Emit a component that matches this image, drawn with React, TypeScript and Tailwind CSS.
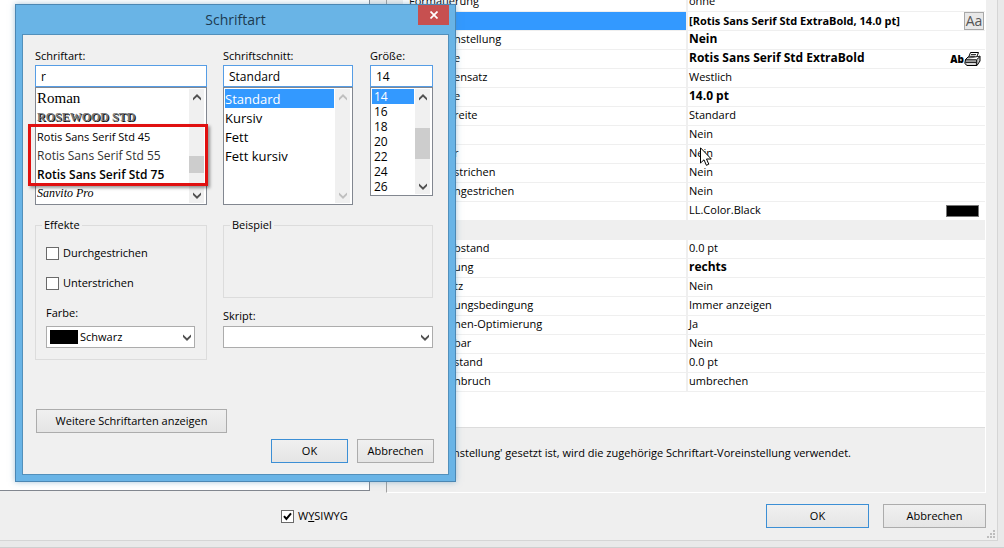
import React from 'react';
import { clsx } from 'clsx';

interface Property {
  label: string;
  value?: string;
  bold?: boolean;
  selected?: boolean;
  section?: boolean;
  extra?: 'font' | 'printer' | 'color';
}

const properties: Property[] = [
  { label: 'Formatierung', value: 'ohne' },
  { label: '', value: '[Rotis Sans Serif Std ExtraBold, 14.0 pt]', selected: true, extra: 'font' },
  { label: 'nstellung', value: 'Nein', bold: true },
  { label: 'e', value: 'Rotis Sans Serif Std ExtraBold', bold: true, extra: 'printer' },
  { label: 'ensatz', value: 'Westlich' },
  { label: 'e', value: '14.0 pt', bold: true },
  { label: 'reite', value: 'Standard' },
  { label: '', value: 'Nein' },
  { label: 'r', value: 'Nein' },
  { label: 'strichen', value: 'Nein' },
  { label: 'ngestrichen', value: 'Nein' },
  { label: '', value: 'LL.Color.Black', extra: 'color' },
  { label: '', section: true },
  { label: 'bstand', value: '0.0 pt' },
  { label: 'ung', value: 'rechts', bold: true },
  { label: 'tz', value: 'Nein' },
  { label: 'ungsbedingung', value: 'Immer anzeigen' },
  { label: 'nen-Optimierung', value: 'Ja' },
  { label: 'bar', value: 'Nein' },
  { label: 'stand', value: '0.0 pt' },
  { label: 'nbruch', value: 'umbrechen' },
];

const fonts = [
  { name: 'Roman', className: 'font-["Liberation_Serif",serif] text-[15px]' },
  {
    name: 'ROSEWOOD STD',
    className:
      'font-["Liberation_Serif",serif] text-xs font-bold text-[#777] [text-shadow:1px_1px_0_#111]',
  },
  { name: 'Rotis Sans Serif Std 45', className: 'text-[11px]' },
  { name: 'Rotis Sans Serif Std 55', className: 'text-xs text-[#333]' },
  { name: 'Rotis Sans Serif Std 75', className: 'text-xs font-semibold' },
  { name: 'Sanvito Pro', className: 'font-["Liberation_Serif",serif] text-xs italic' },
];

const styles = ['Standard', 'Kursiv', 'Fett', 'Fett kursiv'];
const sizes = ['14', '16', '18', '20', '22', '24', '26'];

const Chevron: React.FC<{ up?: boolean; className?: string }> = ({ up, className }) => (
  <svg viewBox="0 0 8 7" className={clsx('w-2 h-[7px]', className)} fill="currentColor" aria-hidden="true">
    <path d={up ? 'M0 4 4 0 8 4V6.6L4 2.8 0 6.6Z' : 'M0 3 4 7 8 3V.4L4 4.2 0 .4Z'} />
  </svg>
);

const ScrollBar: React.FC<{ disabled?: boolean; thumb?: string }> = ({ disabled, thumb }) => (
  <div
    className={clsx(
      'relative flex w-[15px] shrink-0 flex-col justify-between bg-[#f0f0f0]',
      disabled ? 'text-[#bfbfbf]' : 'text-[#505050]'
    )}
  >
    <button disabled={disabled} aria-label="Nach oben" className="flex h-4 items-center justify-center">
      <Chevron up />
    </button>
    {thumb && <div className={clsx('absolute inset-x-0 bg-[#cdcdcd]', thumb)} />}
    <button disabled={disabled} aria-label="Nach unten" className="flex h-4 items-center justify-center">
      <Chevron />
    </button>
  </div>
);

const DialogButton: React.FC<{ primary?: boolean; className?: string; children: React.ReactNode }> = ({
  primary,
  className,
  children,
}) => (
  <button
    className={clsx(
      'h-6 border bg-linear-to-b from-[#f0f0f0] to-[#e5e5e5] text-center',
      primary ? 'border-[#3c8fd5]' : 'border-[#acacac]',
      className
    )}
  >
    {children}
  </button>
);

const CheckBox: React.FC<{ id: string; checked?: boolean; children: React.ReactNode }> = ({
  id,
  checked,
  children,
}) => (
  <div className="flex items-center gap-1">
    <span className="relative flex">
      <input
        id={id}
        type="checkbox"
        defaultChecked={checked}
        className="peer h-[13px] w-[13px] appearance-none border border-[#6a6a6a] bg-white"
      />
      <svg
        viewBox="0 0 13 13"
        className="pointer-events-none absolute inset-0 hidden h-[13px] w-[13px] peer-checked:block"
        fill="none"
        stroke="#000"
        strokeWidth="2"
      >
        <path d="M3 6.2 5.4 9 10 3.4" />
      </svg>
    </span>
    <label htmlFor={id}>{children}</label>
  </div>
);

const PrinterIcon: React.FC = () => (
  <svg viewBox="0 0 17 16" className="h-4 w-[17px]" stroke="#000" fill="#fff" aria-hidden="true">
    <path d="M4.5 6.5 6.5 1.5H14.5L12.5 6.5Z" />
    <path d="M7 3.5H12M6.3 5.2H11.5" strokeWidth=".8" />
    <path d="M1.5 8.5 4 6H13L16 5V10L13 14.5H3L.8 12.5Z" fill="#c4c4c4" />
    <path d="M1 8.8H12.5L16 5.5M12.7 9V14M1.5 11.3H12" />
    <path d="M3 13H11" stroke="#fff" strokeWidth=".8" />
  </svg>
);

const PropertyGrid: React.FC = () => (
  <table className="-mt-[7px] w-full table-fixed border-separate border-spacing-0 leading-4">
    <colgroup>
      <col className="w-[285px]" />
      <col />
    </colgroup>
    <tbody>
      {properties.map((p, i) =>
        p.section ? (
          <tr key={i}>
            <td colSpan={2} className="h-[19px] bg-[#efefef] p-0" />
          </tr>
        ) : (
          <tr key={i}>
            <td
              className={clsx(
                'h-[19px] border-r-2 border-b border-[#efefef] pt-0 pb-0.5 whitespace-nowrap',
                i === 0 ? 'pl-1.5' : 'pl-[51px]',
                p.selected && 'bg-[#3399ff]'
              )}
            >
              {p.label}
            </td>
            <td className="h-[19px] border-b border-[#efefef] p-0 pl-px">
              <div className="flex h-[18px] items-center justify-between">
                <span
                  className={clsx(
                    'whitespace-nowrap',
                    p.bold && 'text-xs font-bold',
                    p.selected && 'font-bold',
                    !p.selected && 'pb-0.5'
                  )}
                >
                  {p.value}
                </span>
                {p.extra === 'font' && (
                  <button className="mr-px h-[18px] w-5 border border-[#a8a8a8] bg-[#e8e8e8] text-sm leading-4 text-[#555]">
                    Aa
                  </button>
                )}
                {p.extra === 'printer' && (
                  <span className="mr-1 flex items-center text-[10px] font-extrabold">
                    Ab
                    <PrinterIcon />
                  </span>
                )}
                {p.extra === 'color' && <span className="mr-1.5 h-3 w-[33px] border border-[#777] bg-black" />}
              </div>
            </td>
          </tr>
        )
      )}
    </tbody>
  </table>
);

const inputClass = 'h-[22px] w-full border border-[#569de5] bg-white px-[5px] text-xs';
const listClass = 'flex border border-[#828790] bg-white py-px pr-0.5 pl-px';

const FontDialog: React.FC = () => (
  <div
    role="dialog"
    aria-labelledby="dialog-title"
    className="absolute top-1 left-[15px] w-[441px] border border-[#4b87b3] bg-[#69b4e6] px-1.5 pb-1.5 shadow-[0_0_6px_rgba(80,140,180,0.5)]"
  >
    <div className="relative flex h-[29px] items-center justify-center">
      <h1 id="dialog-title" className="text-sm text-[#1c3a50]">
        Schriftart
      </h1>
      <button
        aria-label="Schließen"
        className="absolute top-0 right-0 flex h-5 w-[31px] items-center justify-center bg-[#c75050]"
      >
        <svg viewBox="0 0 8 8" className="h-2 w-2" stroke="#fff" strokeWidth="1.7">
          <path d="M.5.5 7.5 7.5M7.5.5.5 7.5" />
        </svg>
      </button>
    </div>

    <div className="border border-[#5290bb] bg-[#f0f0f0] pt-3.5 pr-3.5 pb-[11px] pl-3">
      <div className="flex items-start gap-4">
        <div className="w-[172px]">
          <label htmlFor="font-name" className="block h-4 leading-[14px]">
            Schriftart:
          </label>
          <input id="font-name" defaultValue="r" className={inputClass} />
          <div className={clsx(listClass, 'relative h-[118px]')}>
            <ul role="listbox" aria-label="Schriftart" className="flex-1 overflow-hidden">
              {fonts.map((f) => (
                <li
                  key={f.name}
                  role="option"
                  aria-selected={false}
                  className={clsx('h-[19px] leading-[19px] whitespace-nowrap', f.className)}
                >
                  {f.name}
                </li>
              ))}
            </ul>
            <ScrollBar thumb="top-[67px] h-[17px]" />
            <div className="pointer-events-none absolute top-9 -left-2 h-[62px] w-[180px] border-3 border-[#e01010] shadow-[2px_2px_3px_rgba(0,0,0,0.4)]" />
          </div>
        </div>

        <div className="w-[130px]">
          <label htmlFor="font-style" className="block h-4 leading-[14px]">
            Schriftschnitt:
          </label>
          <input id="font-style" defaultValue="Standard" className={inputClass} />
          <div className={clsx(listClass, 'h-[118px]')}>
            <ul role="listbox" aria-label="Schriftschnitt" className="flex-1 text-[13px]">
              {styles.map((s, i) => (
                <li
                  key={s}
                  role="option"
                  aria-selected={i === 0}
                  className={clsx('mr-px h-[19px] leading-5', i === 0 && 'bg-[#3399ff] text-white')}
                >
                  {s}
                </li>
              ))}
            </ul>
            <ScrollBar disabled />
          </div>
        </div>

        <div className="ml-px w-[63px]">
          <label htmlFor="font-size" className="block h-4 leading-[14px]">
            Größe:
          </label>
          <input id="font-size" defaultValue="14" className={inputClass} />
          <div className={clsx(listClass, 'h-[109px]')}>
            <ul role="listbox" aria-label="Größe" className="flex-1 text-xs">
              {sizes.map((s, i) => (
                <li
                  key={s}
                  role="option"
                  aria-selected={i === 0}
                  className={clsx('mr-px h-[15px] pl-0.5 leading-[15px]', i === 0 && 'bg-[#3399ff] text-white')}
                >
                  {s}
                </li>
              ))}
            </ul>
            <ScrollBar thumb="top-[39px] h-[31px]" />
          </div>
        </div>
      </div>

      <div className="mt-3 flex gap-4 pr-px">
        <fieldset className="h-[143px] w-[172px] border border-[#dcdcdc] pr-[11px] pl-2.5">
          <legend className="-ml-1 px-0.5">Effekte</legend>
          <div className="mt-3 flex flex-col gap-3.5">
            <CheckBox id="strike">Durchgestrichen</CheckBox>
            <CheckBox id="underline">Unterstrichen</CheckBox>
          </div>
          <label htmlFor="color" className="mt-3.5 block">
            Farbe:
          </label>
          <div className="relative mt-[5px]">
            <select
              id="color"
              className="h-[22px] w-full appearance-none border border-[#acacac] bg-white pl-[33px]"
            >
              <option>Schwarz</option>
            </select>
            <span className="pointer-events-none absolute top-1 left-1 h-3.5 w-7 bg-black" />
            <Chevron className="pointer-events-none absolute top-2 right-1 text-[#505050]" />
          </div>
        </fieldset>

        <div className="flex-1">
          <fieldset className="h-[81px] border border-[#dcdcdc] px-2.5">
            <legend className="-ml-1 px-0.5">Beispiel</legend>
          </fieldset>
          <label htmlFor="script" className="mt-2.5 block">
            Skript:
          </label>
          <div className="relative mt-0.5">
            <select id="script" className="h-[22px] w-full appearance-none border border-[#acacac] bg-white" />
            <Chevron className="pointer-events-none absolute top-2 right-1 text-[#505050]" />
          </div>
        </div>
      </div>

      <DialogButton className="mt-[49px] ml-px w-[191px]">Weitere Schriftarten anzeigen</DialogButton>
      <div className="mt-1.5 flex justify-end gap-[9px]">
        <DialogButton primary className="w-[77px]">
          OK
        </DialogButton>
        <DialogButton className="w-[77px]">Abbrechen</DialogButton>
      </div>
    </div>
  </div>
);

export default function App() {
  return (
    <div className='relative flex min-h-screen flex-col overflow-hidden border-b border-[#cfcfcf] bg-[#e9e9e9] pr-1.5 pb-1.5 font-["Open_Sans",sans-serif] text-[11px] leading-4 text-black'>
      <div className="relative flex flex-1 flex-col border-r border-b border-[#d5d5d5] bg-[#efefef] pr-[11px]">
        <div className="flex flex-1 gap-4">
          <div className="mb-0.5 w-[370px] shrink-0 border-r border-b border-[#828790] bg-white" />
          <div className="flex min-w-0 flex-1 flex-col border-r border-b border-l border-r-white border-b-white border-l-[#a0a0a0]">
            <div className="ml-4 flex-1 overflow-hidden bg-white">
              <PropertyGrid />
            </div>
            <div className="h-[65px] border-t border-[#dcdcdc] pt-[17px] pl-[66px] whitespace-nowrap">
              nstellung' gesetzt ist, wird die zugehörige Schriftart-Voreinstellung verwendet.
            </div>
          </div>
        </div>

        <div className="flex items-center pt-[11px] pb-3">
          <div className="flex-1 pl-[281px]">
            <CheckBox id="wysiwyg" checked>
              W<u>Y</u>SIWYG
            </CheckBox>
          </div>
          <div className="flex gap-3.5">
            <DialogButton primary className="w-[103px]">
              OK
            </DialogButton>
            <DialogButton className="w-[103px]">Abbrechen</DialogButton>
          </div>
        </div>

        <svg viewBox="0 0 8 8" className="absolute right-0.5 bottom-0.5 h-2 w-2" fill="#bdbdbd" aria-hidden="true">
          <path d="M6 0h2v2H6zM3 3h2v2H3zM6 3h2v2H6zM0 6h2v2H0zM3 6h2v2H3zM6 6h2v2H6z" />
        </svg>
      </div>

      <FontDialog />

      {/* Mouse pointer */}
      <svg
        viewBox="0 0 12 19"
        className="pointer-events-none absolute top-[147px] left-[700px] h-[19px] w-3"
        fill="#fff"
        stroke="#000"
        strokeWidth="1"
      >
        <path d="M.5.8V16L4 12.8 6.4 18.3 8.8 17.2 6.5 12H11.3Z" />
      </svg>
    </div>
  );
}
